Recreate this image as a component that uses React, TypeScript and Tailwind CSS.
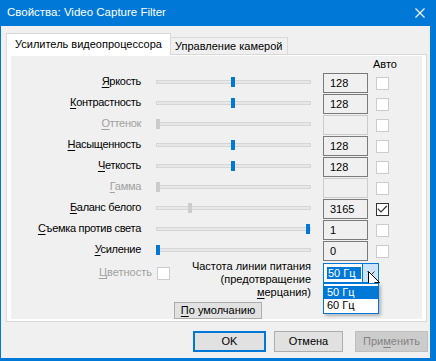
import React from "react"

type Row = {
  label: string
  value: string
  pos: number
  enabled: boolean
  blue: boolean
  checked?: boolean
}

const rows: Row[] = [
  { label: "Яркость", value: "128", pos: 75, enabled: true, blue: true },
  { label: "Контрастность", value: "128", pos: 75, enabled: true, blue: true },
  { label: "Оттенок", value: "", pos: 0, enabled: false, blue: false },
  { label: "Насыщенность", value: "128", pos: 75, enabled: true, blue: true },
  { label: "Четкость", value: "128", pos: 75, enabled: true, blue: true },
  { label: "Гамма", value: "", pos: 0, enabled: false, blue: false },
  { label: "Баланс белого", value: "3165", pos: 32, enabled: true, blue: false, checked: true },
  { label: "Съемка против света", value: "1", pos: 150, enabled: true, blue: true },
  { label: "Усиление", value: "0", pos: 0, enabled: true, blue: true },
]

function Accel({ text }: { text: string }) {
  return (
    <>
      <span className="underline underline-offset-2">{text[0]}</span>
      {text.slice(1)}
    </>
  )
}

function Check({ checked }: { checked?: boolean }) {
  return (
    <div
      className={`w-[13px] h-[13px] shrink-0 border bg-white flex items-center justify-center ${
        checked ? "border-[#333333]" : "border-[#cccccc]"
      }`}
    >
      {checked && (
        <svg width="11" height="11" viewBox="0 0 11 11">
          <path d="M0.8 4.6 L4 7.8 L9.8 2" stroke="#333333" strokeWidth="1.2" fill="none" />
        </svg>
      )}
    </div>
  )
}

function Slider({ pos, blue }: { pos: number; blue: boolean }) {
  return (
    <div className="relative w-[155px] h-[10px] mb-[2px] shrink-0">
      <div className="absolute left-0 right-0 top-[3px] h-[4px] bg-[#e7e7e7] border border-[#d6d6d6]" />
      <div
        className={`absolute top-0 w-[4px] h-[10px] ${blue ? "bg-[#0078d7]" : "bg-[#cccccc]"}`}
        style={{ left: pos }}
      />
    </div>
  )
}

export default function App() {
  return (
    <div className="w-[436px] h-[361px] bg-[#0078d7] flex flex-col font-['Liberation_Sans',Arial,sans-serif] text-[11px] text-black whitespace-nowrap">
      {/* title bar */}
      <div className="h-[26px] shrink-0 flex items-center justify-between pl-[7px] pr-[11px] text-white text-[11.5px]">
        <span>Свойства: Video Capture Filter</span>
        <svg width="10" height="10" viewBox="0 0 10 10">
          <path d="M0.5 0.5 L9.5 9.5 M9.5 0.5 L0.5 9.5" stroke="#ffffff" strokeWidth="1.1" />
        </svg>
      </div>

      <div className="flex-1 pl-px pr-[6px] pb-[3px] flex">
        <div className="flex-1 bg-[#f0f0f0] flex flex-col pt-[7px] pl-[5px]">
          {/* tabs */}
          <div className="flex items-end h-[21px]">
            <div className="relative z-10 -mb-px w-[165px] h-[22px] bg-white border border-b-0 border-[#d9d9d9] flex items-center pl-[8px] pb-px">
              Усилитель видеопроцессора
            </div>
            <div className="w-[117px] h-[17px] border-t border-r border-[#d9d9d9] flex items-center pl-[4px]">
              Управление камерой
            </div>
          </div>

          {/* panel */}
          <div className="w-[421px] h-[268px] bg-white border border-[#d9d9d9] pt-px px-[4px] pb-[2px] flex">
            <div className="flex-1 bg-[#f0f0f0] flex flex-col">
              <div className="h-[17px] leading-[17px] pl-[362px]">Авто</div>

              <div className="flex flex-col gap-px">
                {rows.map((r) => (
                  <div key={r.label} className="h-[20px] flex items-center">
                    <div
                      className={`w-[130px] text-right mb-[3px] tracking-[-0.3px] ${
                        r.enabled ? "text-black" : "text-[#a0a0a0]"
                      }`}
                    >
                      <Accel text={r.label} />
                    </div>
                    <div className="ml-[15px] flex items-center">
                      <Slider pos={r.pos} blue={r.blue} />
                    </div>
                    <div
                      className={`ml-[12px] w-[45px] h-[20px] border flex items-center pl-[6px] ${
                        r.enabled ? "border-[#7a7a7a]" : "border-[#cccccc]"
                      }`}
                    >
                      {r.value}
                    </div>
                    <div className="ml-[8px]">
                      <Check checked={r.checked} />
                    </div>
                  </div>
                ))}
              </div>

              {/* bottom controls */}
              <div className="mt-px flex items-start">
                <div className="w-[159px] mt-[4px] flex justify-end items-center gap-[5px]">
                  <span className="text-[#a0a0a0] leading-[13px] mb-[2px]">
                    <Accel text="Цветность" />
                  </span>
                  <Check />
                </div>
                <div className="w-[141px] -mt-[2px] text-right leading-[13px]">
                  <div>Частота линии питания</div>
                  <div>(предотвращение</div>
                  <div>
                    <Accel text="мерцания)" />
                  </div>
                </div>
                <div className="relative ml-[12px] mt-px w-[56px] h-[20px] bg-white border border-[#0078d7] flex z-20">
                  <div className="flex-1 flex items-center pl-[3px]">
                    <span className="w-[34px] h-[12px] leading-[12px] bg-[#0078d7] text-white pl-px">50 Гц</span>
                  </div>
                  <div className="w-[16px] bg-[#cce4f7] border-l border-[#0078d7] flex items-center justify-center">
                    <svg width="8" height="5" viewBox="0 0 8 5">
                      <path d="M0.5 0.5 L4 4 L7.5 0.5" stroke="#333333" fill="none" />
                    </svg>
                  </div>
                  {/* mouse pointer */}
                  <svg
                    className="absolute left-[44px] top-[7px]"
                    width="13"
                    height="20"
                    viewBox="0 0 13 20"
                  >
                    <path
                      d="M0.5 0.5 L0.5 16 L4.3 12.4 L7 18.6 L9.2 17.6 L6.6 11.6 L11.6 11.6 Z"
                      fill="#ffffff"
                      stroke="#000000"
                      strokeWidth="1"
                      strokeLinejoin="round"
                    />
                  </svg>
                  {/* dropdown list */}
                  <div className="absolute -left-px top-[19px] w-[56px] h-[31px] bg-white border border-[#0078d7] pt-[2px] shadow-[2px_2px_3px_rgba(0,0,0,0.25)]">
                    <div className="h-[13px] leading-[13px] bg-[#0078d7] text-white pl-[3px]">50 Гц</div>
                    <div className="h-[13px] leading-[13px] pl-[3px]">60 Гц</div>
                  </div>
                </div>
              </div>

              <button className="mt-[3px] ml-[163px] w-[88px] h-[17px] bg-[#e1e1e1] border border-[#adadad] flex items-center justify-center leading-none">
                <Accel text="По умолчанию" />
              </button>
            </div>
          </div>

          {/* dialog buttons */}
          <div className="mt-[9px] flex">
            <button className="ml-[187px] w-[73px] h-[21px] bg-[#e1e1e1] border-2 border-[#0078d7] flex items-center justify-center">
              OK
            </button>
            <button className="ml-[8px] w-[69px] h-[21px] bg-[#e1e1e1] border border-[#adadad] flex items-center justify-center">
              Отмена
            </button>
            <button className="ml-[12px] w-[73px] h-[21px] bg-[#cccccc] border border-[#bfbfbf] text-[#838383] flex items-center justify-center">
              При<span className="underline underline-offset-2">м</span>енить
            </button>
          </div>
        </div>
      </div>
    </div>
  )
}
